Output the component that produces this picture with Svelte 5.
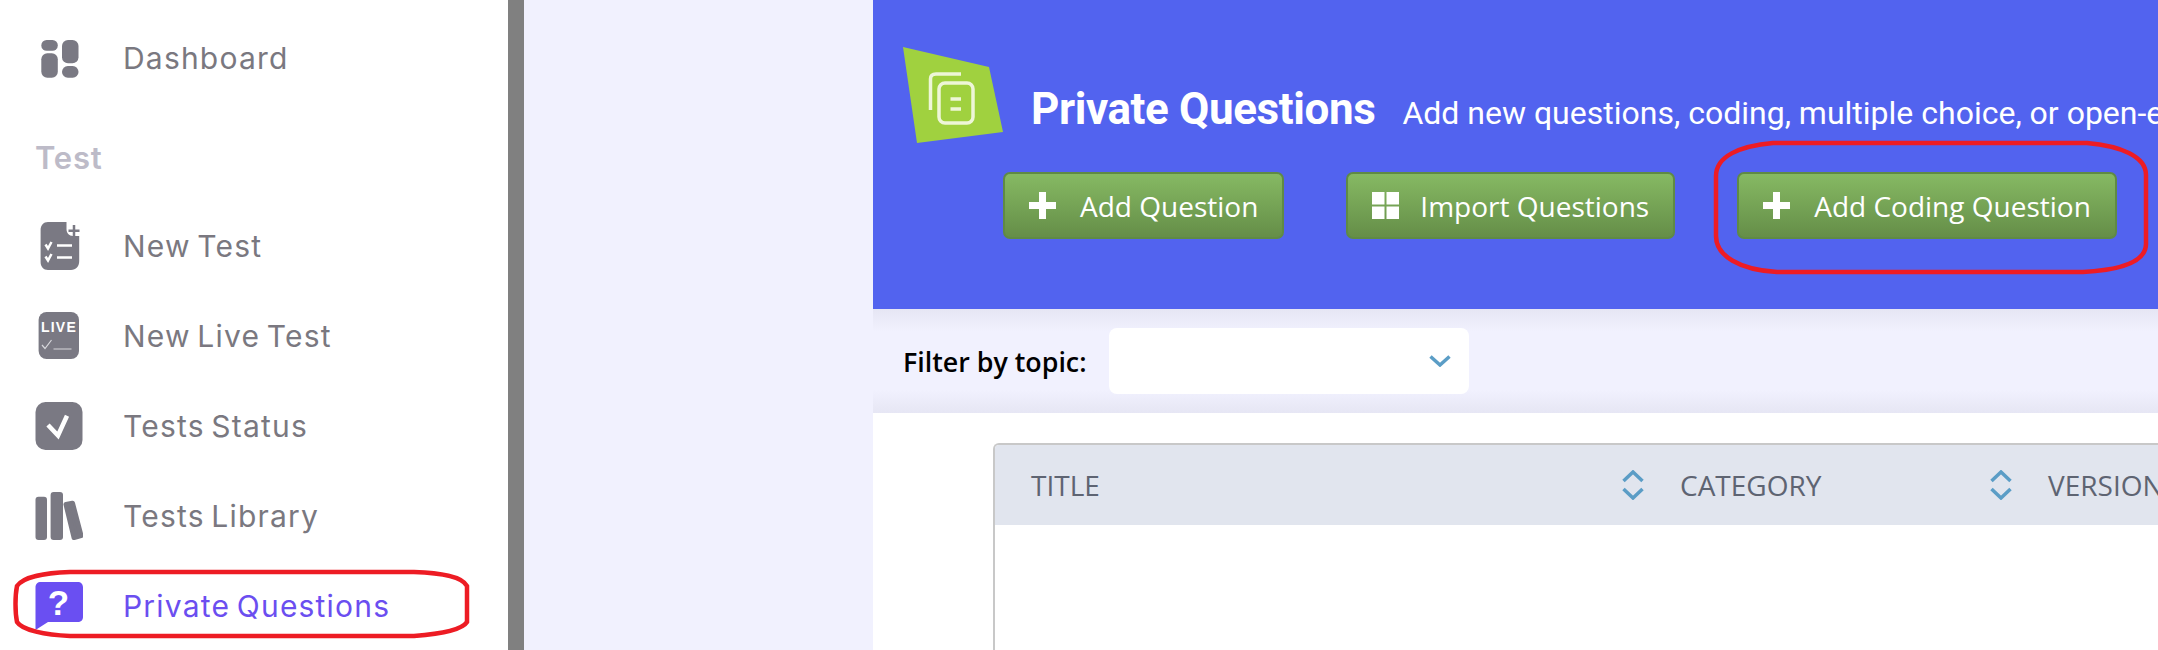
<script lang="ts">
  // sidebar rows after the "Test" heading
  const testLinks = [
    { id: 'new', label: 'New Test' },
    { id: 'live', label: 'New Live Test' },
    { id: 'status', label: 'Tests Status' },
    { id: 'library', label: 'Tests Library' },
    { id: 'private', label: 'Private Questions', active: true },
  ];

  const columns = [
    { label: 'TITLE', width: 649, sort: true },
    { label: 'CATEGORY', width: 368, sort: true },
    { label: 'VERSION', width: 200, sort: false },
  ];
</script>

{#snippet icon(id: string)}
  <svg class="icon" viewBox="0 0 48 48" width="48" height="48" aria-hidden="true">
    {#if id === 'dashboard'}
      <rect x="6.3" y="6" width="16.5" height="10.7" rx="5.3" />
      <rect x="6.3" y="19.3" width="16.5" height="24.4" rx="6" />
      <rect x="27" y="6" width="16.5" height="23.3" rx="6" />
      <rect x="27" y="32" width="16.5" height="11.7" rx="5.8" />
    {:else if id === 'new'}
      <path d="M13 0H31.5V7C31.5 11 34 14 38 14H44.2V39C44.2 44.5 41 48 36 48H13C8.500 48 5.600 44.500 5.600 40V8C5.600 3.500 8.500 0 13 0Z" />
      <path class="line" d="M39 3V14.500M33.500 8.700H44.500" style="stroke:#7a7983" />
      <path class="line" d="M10.500 22.500L13 26.500L16.500 20M10.500 34.500L13 38.500L16.500 32M22 23.500H37M22 35.500H37" />
    {:else if id === 'live'}
      <rect x="3.600" y="0" width="40.400" height="47" rx="8" />
      <text class="live" x="24" y="20">LIVE</text>
      <path class="thin" d="M7 33L10 36.500L16.500 28M18.500 37H36.500" />
    {:else if id === 'status'}
      <rect x="0.500" y="0" width="47" height="48" rx="10" />
      <path class="line tick" d="M13 23L23 33.500L32 13.700" />
    {:else if id === 'library'}
      <rect x="0.500" y="4.700" width="11.500" height="43.300" rx="3" />
      <rect x="15.600" y="0" width="12.400" height="48" rx="3" />
      <path class="lean" d="M31 12.500L37.500 11.200L46 43.500L39 45.500Z" />
    {:else if id === 'private'}
      <path class="purple" d="M6 0H42.500C46 0 48 2 48 5.500V35C48 38 46 40 42.500 40H13L0.500 48V5.500C0.500 2 2.500 0 6 0Z" />
      <text class="qmark" x="24" y="33">?</text>
    {/if}
  </svg>
{/snippet}

{#snippet sortArrows()}
  <svg class="sort" viewBox="0 0 22 30" width="22" height="30" aria-hidden="true">
    <path d="M1.500 11L11 2L20.500 11M1.500 19L11 28L20.500 19" />
  </svg>
{/snippet}

<div class="page">
  <aside class="sidebar">
    <a class="row first" href="#dashboard">
      {@render icon('dashboard')}
      <span>Dashboard</span>
    </a>
    <h4>Test</h4>
    {#each testLinks as link (link.id)}
      <a class="row" class:active={link.active} href="#{link.id}">
        {@render icon(link.id)}
        <span>{link.label}</span>
      </a>
    {/each}
  </aside>

  <div class="gutter"></div>

  <main>
    <section class="hero">
      <div class="heading">
        <svg class="logo" viewBox="0 0 100 96" width="100" height="96" aria-hidden="true">
          <path class="leaf" d="M0 0L86 20L100 85L14 96Z" />
          <g class="doc">
            <path d="M27.500 63V32C27.500 28.500 29.500 27 33 27H58" />
            <rect x="36" y="36" width="34" height="40" rx="6" />
            <path d="M47.500 52H58M47.500 62H58" />
          </g>
        </svg>
        <div class="titles">
          <h1>Private Questions</h1>
          <p>Add new questions, coding, multiple choice, or open-ended questions to your private library</p>
        </div>
      </div>
      <div class="actions">
        <button type="button">
          <svg viewBox="0 0 27 27" width="27" height="27" aria-hidden="true"><path d="M10 0H17V10H27V17H17V27H10V17H0V10H10Z" /></svg>
          Add Question
        </button>
        <button type="button" class="tight">
          <svg viewBox="0 0 27 27" width="27" height="27" aria-hidden="true"><path d="M0 0H12.500V12.500H0ZM14.500 0H27V12.500H14.500ZM0 14.500H12.500V27H0ZM14.500 14.500H27V27H14.500Z" /></svg>
          Import Questions
        </button>
        <button type="button">
          <svg viewBox="0 0 27 27" width="27" height="27" aria-hidden="true"><path d="M10 0H17V10H27V17H17V27H10V17H0V10H10Z" /></svg>
          Add Coding Question
        </button>
      </div>
    </section>

    <section class="filter">
      <span class="filter-label">Filter by topic:</span>
      <div class="select">
        <svg viewBox="0 0 22 12" width="22" height="12" aria-hidden="true"><path d="M1.500 1.500L11 10L20.500 1.500" /></svg>
      </div>
    </section>

    <section class="content">
      <div class="table">
        <div class="thead">
          {#each columns as col (col.label)}
            <div class="th" style="width: {col.width}px">
              <span>{col.label}</span>
              {#if col.sort}{@render sortArrows()}{/if}
            </div>
          {/each}
        </div>
      </div>
    </section>
  </main>

  <!-- hand-drawn red annotations over the screenshot -->
  <svg class="marks" viewBox="0 0 2158 650" width="2158" height="650" aria-hidden="true">
    <path d="M70 572H414C440 573 462 576 467 586V622C462 630 440 634 414 636H70C45 635 22 630 17 622C15 612 15 596 17 586C24 576 45 573 70 572Z" />
    <path d="M1773 143H2087C2120 146 2146 156 2146 175V244C2146 262 2120 270 2083 272H1777C1740 270 1716 256 1716 236V176C1716 156 1740 146 1773 143Z" />
  </svg>
</div>

<style>
  :global(body) {
    margin: 0;
    background: #fff;
  }
  .page {
    position: relative;
    display: flex;
    width: 2158px;
    height: 650px;
    overflow: hidden;
  }

  .sidebar {
    flex: none;
    box-sizing: border-box;
    width: 524px;
    padding: 13px 0 0 35px;
    background: #fff;
    border-right: 16px solid #808080;
    font-family: Inter, "Liberation Sans", sans-serif;
  }
  .row {
    display: flex;
    align-items: center;
    gap: 40px;
    height: 90px;
    font-size: 30px;
    letter-spacing: 1.2px;
    word-spacing: -3px;
    color: #7a7880;
    text-decoration: none;
  }
  .row.active {
    color: #6b4ef0;
  }
  h4 {
    display: flex;
    align-items: center;
    height: 88px;
    margin: 10px 0 0;
    font-size: 31px;
    font-weight: 600;
    letter-spacing: 0.8px;
    color: #bdbbc8;
  }
  .icon {
    flex: none;
    fill: #7a7983;
  }
  .line {
    fill: none;
    stroke: #fff;
    stroke-width: 2.5;
  }
  .tick {
    stroke-width: 4.5;
  }
  .thin {
    fill: none;
    stroke: #d8d8dc;
    stroke-width: 1.2;
  }
  .lean {
    stroke: #7a7983;
    stroke-width: 5;
    stroke-linejoin: round;
  }
  .purple {
    fill: #6a4ff2;
  }
  .live {
    font: 700 14px "Liberation Sans", sans-serif;
    fill: #fff;
    text-anchor: middle;
  }
  .qmark {
    font: 700 35px "Liberation Sans", sans-serif;
    fill: #fff;
    text-anchor: middle;
  }

  .gutter {
    flex: none;
    width: 349px;
    background: #f1f1fe;
  }

  main {
    flex: 1;
    display: flex;
    flex-direction: column;
    min-width: 0;
  }

  .hero {
    flex: none;
    box-sizing: border-box;
    height: 309px;
    padding: 47px 0 0 30px;
    background: #5263ef;
  }
  .heading {
    display: flex;
    gap: 28px;
    height: 96px;
  }
  .logo {
    flex: none;
  }
  .leaf {
    fill: #a0d13f;
  }
  .doc {
    fill: none;
    stroke: #eef6d8;
    stroke-width: 3.5;
  }
  .titles {
    display: flex;
    align-items: baseline;
    gap: 27px;
    padding-top: 36px;
    font-family: Roboto, "Liberation Sans", sans-serif;
    color: #fff;
    white-space: nowrap;
  }
  h1 {
    margin: 0;
    font-size: 44px;
    font-weight: 700;
    line-height: 52px;
    letter-spacing: -0.4px;
  }
  .titles p {
    margin: 0;
    font-size: 32px;
  }
  .actions {
    display: flex;
    gap: 62px;
    margin: 29px 0 0 100px;
  }
  button {
    display: flex;
    align-items: center;
    gap: 24px;
    height: 67px;
    padding: 0 24px;
    border: 2px solid #5f8a45;
    border-radius: 7px;
    background: linear-gradient(#86b963, #658e48);
    font: 400 28px "Open Sans", sans-serif;
    color: #fff;
    white-space: nowrap;
  }
  button.tight {
    gap: 21px;
  }
  button svg {
    flex: none;
    fill: #fff;
  }

  .filter {
    flex: none;
    box-sizing: border-box;
    display: flex;
    align-items: center;
    gap: 22px;
    height: 104px;
    padding-left: 30px;
    background: linear-gradient(#e6e6f4, #f1f1fe 22%, #f1f1fe 78%, #e6e6f4);
  }
  .filter-label {
    font: 600 26.800px "Open Sans", sans-serif;
    color: #000;
  }
  .select {
    display: flex;
    align-items: center;
    justify-content: flex-end;
    box-sizing: border-box;
    width: 360px;
    height: 66px;
    padding-right: 18px;
    background: #fff;
    border-radius: 8px;
  }
  .select path {
    fill: none;
    stroke: #5b9dc6;
    stroke-width: 3.5;
  }

  .content {
    flex: 1;
    display: flex;
    padding: 30px 0 0 120px;
    background: #fff;
  }
  .table {
    flex: 1;
    border-top: 2px solid #c8c8c8;
    border-left: 2px solid #c8c8c8;
    border-top-left-radius: 6px;
    overflow: hidden;
  }
  .thead {
    display: flex;
    height: 80px;
    background: #e1e5ee;
  }
  .th {
    flex: none;
    box-sizing: border-box;
    display: flex;
    align-items: center;
    justify-content: space-between;
    padding-left: 36px;
    font: 500 28px "Open Sans", sans-serif;
    color: #5e6472;
    white-space: nowrap;
  }
  .sort {
    flex: none;
  }
  .sort path {
    fill: none;
    stroke: #5b9dc6;
    stroke-width: 3.5;
  }

  .marks {
    position: absolute;
    top: 0;
    left: 0;
    pointer-events: none;
  }
  .marks path {
    fill: none;
    stroke: #ed1c24;
    stroke-width: 4.5;
  }
</style>
